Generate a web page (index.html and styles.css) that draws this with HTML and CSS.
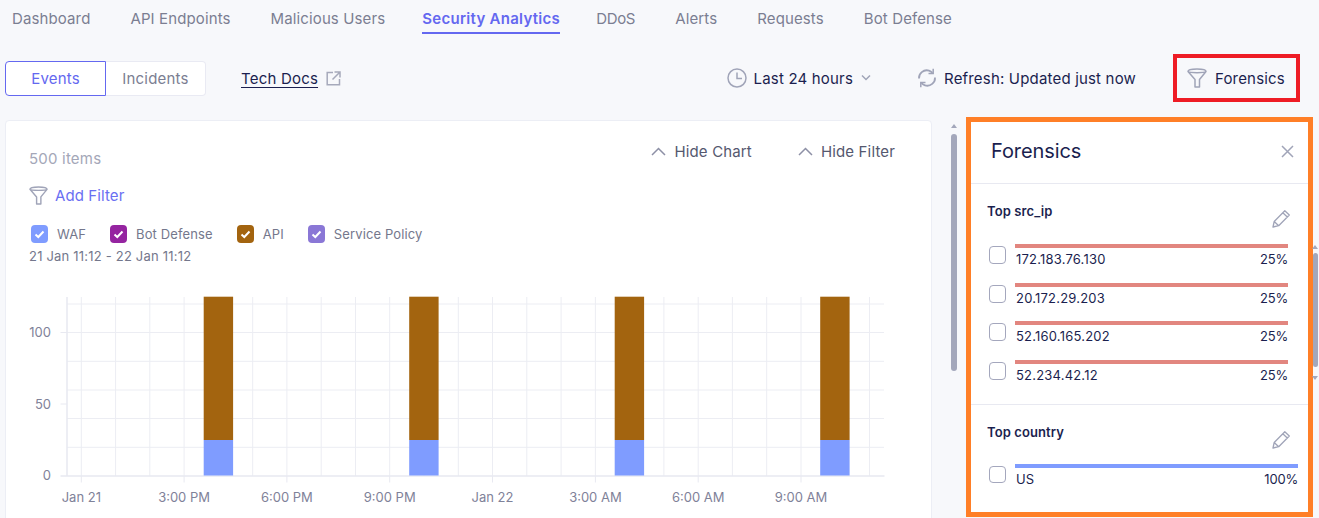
FILE: index.html
```html
<!DOCTYPE html>
<html lang="en">
<head>
<meta charset="utf-8">
<title>Security Analytics</title>
<link rel="stylesheet" href="styles.css">
</head>
<body>
<nav class="tabs">
  <a class="tab">Dashboard</a>
  <a class="tab">API Endpoints</a>
  <a class="tab">Malicious Users</a>
  <a class="tab active">Security Analytics</a>
  <a class="tab">DDoS</a>
  <a class="tab">Alerts</a>
  <a class="tab">Requests</a>
  <a class="tab">Bot Defense</a>
</nav>
<div class="toolbar">
  <div class="segment">
    <button class="seg seg-on">Events</button>
    <button class="seg seg-off">Incidents</button>
  </div>
  <a class="docs"><span class="docs-text">Tech Docs</span>
    <svg class="ic-ext" width="15" height="15" viewBox="0 0 15 15" fill="none"><path d="M7 1.500H1.200v12.300h12.300V8M8.500 1h5.500v5.500M14 1 6.500 8.500" stroke="#a6a9bb" stroke-width="1.500"/></svg>
  </a>
  <div class="tools">
    <div class="tool time">
      <svg width="20" height="20" viewBox="0 0 20 20" fill="none"><circle cx="10" cy="10" r="9" stroke="#a0a4b8" stroke-width="1.500"/><path d="M10 4.500V10.600H15" stroke="#a0a4b8" stroke-width="1.500"/></svg>
      <span>Last 24 hours</span>
      <svg class="chev" width="12" height="8" viewBox="0 0 12 8" fill="none"><path d="M2 1.500 6 5.500 10 1.500" stroke="#a0a4b8" stroke-width="1.500"/></svg>
    </div>
    <div class="tool refresh">
      <svg width="20" height="20" viewBox="0 0 20 20" fill="none"><path d="M2 10.500C1.600 5.600 6.500 1 12 2.600c1.300.4 2.400 1.100 3.500 2.200M18 9.500c.4 4.900-4.500 9.500-10 7.900-1.300-.4-2.400-1.100-3.500-2.200" stroke="#a0a4b8" stroke-width="1.800"/><path d="M16.200 .8V5.500H11.500M3.800 19.200V14.500H8.500" stroke="#a0a4b8" stroke-width="1.500"/></svg>
      <span>Refresh: Updated just now</span>
    </div>
    <div class="tool forensics-btn">
      <svg width="20" height="20" viewBox="0 0 20 20" fill="none"><path d="M1 3.500C1 2 5 1 10 1s9 1 9 2.500L12.500 11.500V19h-4.500v-7.500L1 3.500ZM1 3.500c1.500 1.500 16.500 1.500 18 0" stroke="#a0a4b8" stroke-width="1.500" stroke-linejoin="round"/></svg>
      <span>Forensics</span>
    </div>
  </div>
</div>
<div class="content">
  <section class="card">
    <div class="card-head">
      <div class="count">500 items</div>
      <div class="hides">
        <span class="hide"><svg width="15" height="9" viewBox="0 0 15 9" fill="none"><path d="M1 8 7.500 1.500 14 8" stroke="#8d90a6" stroke-width="1.500"/></svg>Hide Chart</span>
        <span class="hide"><svg width="15" height="9" viewBox="0 0 15 9" fill="none"><path d="M1 8 7.500 1.500 14 8" stroke="#8d90a6" stroke-width="1.500"/></svg>Hide Filter</span>
      </div>
    </div>
    <div class="add-filter">
      <svg width="19" height="19" viewBox="0 0 20 20" fill="none"><path d="M1 3.500C1 2 5 1 10 1s9 1 9 2.500L12.500 11.500V19h-4.500v-7.500L1 3.500ZM1 3.500c1.500 1.500 16.500 1.500 18 0" stroke="#a0a4b8" stroke-width="1.500" stroke-linejoin="round"/></svg>
      <span>Add Filter</span>
    </div>
    <div class="legend">
      <span class="leg"><i class="box waf"><svg width="11" height="9" viewBox="0 0 11 9" fill="none"><path d="M1.500 4.500 4.300 7 9.500 1.500" stroke="#fff" stroke-width="2"/></svg></i>WAF</span>
      <span class="leg"><i class="box bot"><svg width="11" height="9" viewBox="0 0 11 9" fill="none"><path d="M1.500 4.500 4.300 7 9.500 1.500" stroke="#fff" stroke-width="2"/></svg></i>Bot Defense</span>
      <span class="leg"><i class="box api"><svg width="11" height="9" viewBox="0 0 11 9" fill="none"><path d="M1.500 4.500 4.300 7 9.500 1.500" stroke="#fff" stroke-width="2"/></svg></i>API</span>
      <span class="leg"><i class="box svc"><svg width="11" height="9" viewBox="0 0 11 9" fill="none"><path d="M1.500 4.500 4.300 7 9.500 1.500" stroke="#fff" stroke-width="2"/></svg></i>Service Policy</span>
    </div>
    <div class="range">21 Jan 11:12 - 22 Jan 11:12</div>
    <svg class="chart" width="925" height="240" viewBox="6 281 925 240">
      <path class="grid" d="M81.300 297V476M115.600 297V476M149.800 297V476M184.100 297V476M218.400 297V476M252.700 297V476M286.900 297V476M321.200 297V476M355.500 297V476M389.700 297V476M424 297V476M458.300 297V476M492.500 297V476M526.800 297V476M561.100 297V476M595.400 297V476M629.600 297V476M663.900 297V476M698.200 297V476M732.400 297V476M766.700 297V476M801 297V476M835.200 297V476M869.500 297V476"/>
      <path class="grid" d="M67 304H884M67 332.500H884M67 361.300H884M67 390H884M67 418.500H884M67 447.300H884"/>
      <path class="grid thick" d="M67 297V476M60.500 476H884.500"/>
      <path class="tick" d="M60.500 332.500H67M60.500 404H67M81.300 476V482.500M184.100 476V482.500M286.900 476V482.500M389.700 476V482.500M492.500 476V482.500M595.400 476V482.500M698.200 476V482.500M801 476V482.500"/>
      <rect class="b-api" x="203.700" y="296.700" width="29.400" height="143.300"/>
      <rect class="b-waf" x="203.700" y="440" width="29.400" height="35.500"/>
      <rect class="b-api" x="409.200" y="296.700" width="29.400" height="143.300"/>
      <rect class="b-waf" x="409.200" y="440" width="29.400" height="35.500"/>
      <rect class="b-api" x="614.700" y="296.700" width="29.400" height="143.300"/>
      <rect class="b-waf" x="614.700" y="440" width="29.400" height="35.500"/>
      <rect class="b-api" x="820.200" y="296.700" width="29.400" height="143.300"/>
      <rect class="b-waf" x="820.200" y="440" width="29.400" height="35.500"/>
      <g class="ylab">
        <text x="51" y="337">100</text>
        <text x="51" y="408.500">50</text>
        <text x="51" y="480">0</text>
      </g>
      <g class="xlab">
        <text x="81.300" y="501.500">Jan 21</text>
        <text x="184.100" y="501.500">3:00 PM</text>
        <text x="286.900" y="501.500">6:00 PM</text>
        <text x="389.700" y="501.500">9:00 PM</text>
        <text x="492.500" y="501.500">Jan 22</text>
        <text x="595.400" y="501.500">3:00 AM</text>
        <text x="698.200" y="501.500">6:00 AM</text>
        <text x="801" y="501.500">9:00 AM</text>
      </g>
    </svg>
  </section>
  <div class="scroll-left">
    <i class="arrow"></i>
    <i class="thumb"></i>
  </div>
  <aside class="panel">
    <header class="panel-head">
      <h2>Forensics</h2>
      <svg width="13" height="13" viewBox="0 0 13 13" fill="none"><path d="M1 1 12 12M12 1 1 12" stroke="#a0a4b8" stroke-width="1.500"/></svg>
    </header>
    <section class="group first">
      <div class="group-head">
        <h3>Top src_ip</h3>
        <svg class="pencil" width="19" height="19" viewBox="0 0 19 19" fill="none"><path d="M1 18 2.200 12.500 12.800 1.800 17.300 6 6.700 16.700 1 18ZM2.200 12.500 6.700 16.700M10.800 3.800 15.300 8" stroke="#a0a4b8" stroke-width="1.300" stroke-linejoin="round"/></svg>
      </div>
      <div class="row"><i class="check"></i><div class="meter"><div class="bar red"></div><div class="vals"><span>172.183.76.130</span><span>25%</span></div></div></div>
      <div class="row"><i class="check"></i><div class="meter"><div class="bar red"></div><div class="vals"><span>20.172.29.203</span><span>25%</span></div></div></div>
      <div class="row"><i class="check"></i><div class="meter"><div class="bar red"></div><div class="vals"><span>52.160.165.202</span><span>25%</span></div></div></div>
      <div class="row"><i class="check"></i><div class="meter"><div class="bar red"></div><div class="vals"><span>52.234.42.12</span><span>25%</span></div></div></div>
    </section>
    <section class="group">
      <div class="group-head">
        <h3>Top country</h3>
        <svg class="pencil" width="19" height="19" viewBox="0 0 19 19" fill="none"><path d="M1 18 2.200 12.500 12.800 1.800 17.300 6 6.700 16.700 1 18ZM2.200 12.500 6.700 16.700M10.800 3.800 15.300 8" stroke="#a0a4b8" stroke-width="1.300" stroke-linejoin="round"/></svg>
      </div>
      <div class="row wide"><i class="check"></i><div class="meter"><div class="bar blue"></div><div class="vals"><span>US</span><span>100%</span></div></div></div>
    </section>
  </aside>
  <div class="scroll-right">
    <i class="arrow"></i>
    <i class="thumb"></i>
    <i class="arrow down"></i>
  </div>
</div>
</body>
</html>
```
FILE: styles.css
```css
* { box-sizing: border-box; }
html, body { margin: 0; height: 518px; overflow: hidden; }
body {
  background: #f7f8fb;
  font-family: Inter, "Liberation Sans", sans-serif;
  font-size: 15px;
  color: #1b1f4f;
}
svg { display: block; flex: none; }

/* tabs */
.tabs { display: flex; gap: 40px; height: 54px; padding-left: 12px; }
.tab {
  height: 34px;
  padding-top: 10px;
  line-height: 18px;
  letter-spacing: .12px;
  color: #7b7e92;
}
.tab.active {
  color: #6468f0;
  font-weight: 600;
  letter-spacing: .28px;
  margin: 0 -4px 0 -3px;
  border-bottom: 2px solid #6468f0;
}
.tab.active + .tab { letter-spacing: -.3px; }

/* toolbar */
.toolbar { display: flex; align-items: center; height: 48px; padding-left: 5px; padding-right: 19px; }
.segment { display: flex; height: 35px; }
.seg {
  font: inherit;
  letter-spacing: .2px;
  padding: 0;
  height: 35px;
  background: #fff;
  cursor: pointer;
}
.seg-on { width: 101px; border: 1px solid #6468f0; border-radius: 4px 0 0 4px; color: #6468f0; }
.seg-off { width: 100px; border: 1px solid #e9eaf3; border-left: 0; border-radius: 0 4px 4px 0; color: #7b7e92; }
.docs { display: flex; align-items: center; gap: 8px; margin-left: 35px; letter-spacing: .2px; }
.docs-text { text-decoration: underline; text-underline-offset: 3px; }
.tools { display: flex; align-items: center; margin-left: auto; }
.tool { display: flex; align-items: center; gap: 7px; letter-spacing: .18px; }
.time { margin-right: 45px; }
.refresh { margin-right: 37px; }
.forensics-btn {
  width: 127px;
  height: 48px;
  border: 4px solid #ee1c25;
  padding-left: 10px;
  gap: 8px;
}

/* content */
.content { display: flex; height: 401px; margin-top: 15px; padding-left: 5px; }
.card {
  width: 927px;
  height: 420px;
  margin-top: 3px;
  background: #fff;
  border: 1px solid #eceef5;
  border-radius: 4px;
  padding: 0 0 0 23px;
  flex: none;
}
.card-head { display: flex; justify-content: space-between; height: 57px; padding-right: 36px; }
.count { padding-top: 29px; line-height: 18px; color: #a4a7b8; letter-spacing: .2px; }
.hides { display: flex; gap: 46px; padding-top: 21px; letter-spacing: .15px; color: #55586f; }
.hide { display: flex; align-items: center; gap: 8px; height: 18px; }
.add-filter { display: flex; align-items: center; gap: 7px; height: 20px; color: #6a6ff2; letter-spacing: .1px; margin-top: 7px; }
.legend { display: flex; height: 18px; margin-top: 20px; padding-left: 2px; font-size: 13px; letter-spacing: .12px; color: #74778c; gap: 24px; }
.leg { display: flex; align-items: center; gap: 9px; }
.box { width: 17px; height: 18px; border-radius: 4px; display: flex; align-items: center; justify-content: center; }
.waf { background: #7f9cff; }
.bot { background: #9524a0; }
.api { background: #a3640f; }
.svc { background: #8a77d6; }
.range { font-size: 13px; line-height: 16px; margin-top: 5px; color: #74778c; letter-spacing: .2px; }
.chart { margin-left: -23px; margin-top: 17px; }
.grid { stroke: #ecedf3; stroke-width: 1; fill: none; }
.thick { stroke: #e8e9f1; stroke-width: 1.500; }
.tick { stroke: #e8e9f1; stroke-width: 1; fill: none; }
.b-api { fill: #a3640f; }
.b-waf { fill: #7f9cff; }
.ylab text { font-size: 13px; fill: #7f8299; text-anchor: end; }
.xlab text { font-size: 13px; fill: #7f8299; text-anchor: middle; }

/* fake scrollbars */
.scroll-left { width: 34px; flex: none; }
.arrow { display: block; width: 0; height: 0; border: 3.500px solid transparent; border-top: 0; border-bottom: 4px solid #a3a7bb; }
.thumb { display: block; background: #a3a7bb; border-radius: 3px; }
.scroll-left .arrow { margin: 7px 0 0 18.500px; }
.scroll-left .thumb { width: 6px; height: 237px; margin: 6px 0 0 19px; }
.scroll-right { width: 6px; flex: none; padding-top: 128px; }
.scroll-right .arrow { margin-left: -1.500px; }
.scroll-right .thumb { width: 5px; height: 114px; margin: 4px 0 0 0; }
.scroll-right .down { margin-top: 9px; border-top: 4px solid #a3a7bb; border-bottom: 0; }

/* panel */
.panel {
  width: 347px;
  height: 400px;
  flex: none;
  background: #fff;
  border: 5px solid #ff7f27;
  overflow: hidden;
}
.panel-head {
  display: flex;
  align-items: center;
  justify-content: space-between;
  height: 62px;
  padding: 0 14px 3px 20px;
  border-bottom: 1px solid #e8e9f1;
}
.panel-head h2 { margin: 0; font-size: 20px; font-weight: 400; letter-spacing: -.1px; }
.group { padding: 0 10px 0 16px; }
.first { height: 221px; border-bottom: 1px solid #e8e9f1; }
.group-head { display: flex; justify-content: space-between; height: 60px; padding-right: 7px; }
.group-head h3 { margin: 0; padding-top: 19px; font-size: 13px; line-height: 16px; font-weight: 600; letter-spacing: .1px; }
.pencil { margin-top: 25px; }
.row { display: flex; height: 38.500px; padding-left: 2px; gap: 9px; }
.check { width: 17px; height: 18px; margin-top: 2px; border: 1px solid #a4a7bd; border-radius: 4px; background: #fff; flex: none; }
.wide .check { height: 17px; margin-top: 1px; }
.meter { width: 273px; }
.wide .meter { width: 283px; }
.bar { height: 4px; }
.wide .bar { margin-top: -1px; }
.red { background: #e2867f; }
.blue { background: #7f9cff; }
.vals { display: flex; justify-content: space-between; font-size: 13px; line-height: 16px; margin-top: 3px; padding-left: 1px; letter-spacing: .2px; }
.vals span:last-child { letter-spacing: -.2px; }
```
